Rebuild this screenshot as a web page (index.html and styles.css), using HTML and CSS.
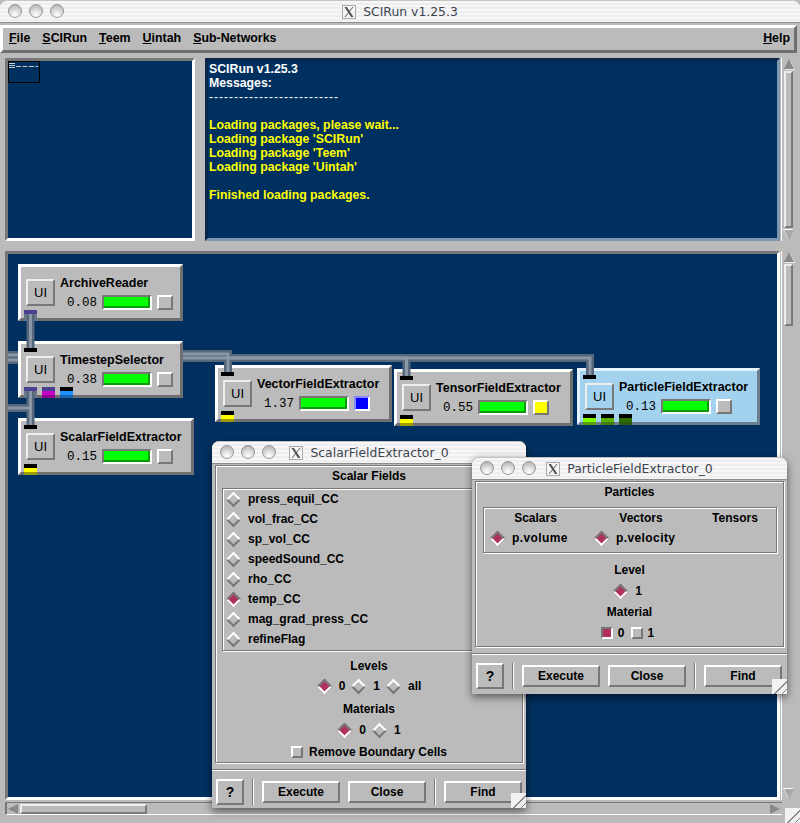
FILE: index.html
```html
<!DOCTYPE html>
<html lang="en">
<head>
    <meta charset="UTF-8">
    <title>SCIRun v1.25.3</title>
    <link rel="stylesheet" href="styles.css">
</head>
<body>

<svg class="defs" width="0" height="0">
    <symbol id="xlogo" viewBox="0 0 14 14">
        <rect x="0.5" y="0.5" width="13" height="13" fill="#f6f6f6" stroke="#aaa"/>
        <path d="M2.5 2 L5 2 L11.5 12 L9 12 Z" fill="#555"/>
        <path d="M10.5 2 L11.5 2 L3.5 12 L2.5 12 Z" fill="#555"/>
    </symbol>
</svg>

<div class="app">
    <div class="titlebar">
        <div class="lights"><i></i><i></i><i></i></div>
        <div class="wintitle main-title"><svg class="xicon"><use href="#xlogo"/></svg>SCIRun v1.25.3</div>
    </div>

    <div class="menubar">
        <span><u>F</u>ile</span>
        <span><u>S</u>CIRun</span>
        <span><u>T</u>eem</span>
        <span><u>U</u>intah</span>
        <span><u>S</u>ub-Networks</span>
        <span class="help"><u>H</u>elp</span>
    </div>

    <div class="toprow">
        <div class="minimap">
            <div class="viewport">
                <svg width="32" height="8">
                    <path d="M0 1.5H6M0 3.5H6M0 5.5H6" stroke="#ccc"/>
                    <path d="M7 4.5H29" stroke="#ccc" stroke-dasharray="5 1.5"/>
                </svg>
            </div>
        </div>
        <div class="messages">
            <div class="white">SCIRun v1.25.3</div>
            <div class="white">Messages:</div>
            <div class="white dashes">--------------------------</div>
            <div>&nbsp;</div>
            <div>Loading packages, please wait...</div>
            <div>Loading package 'SCIRun'</div>
            <div>Loading package 'Teem'</div>
            <div>Loading package 'Uintah'</div>
            <div>&nbsp;</div>
            <div>Finished loading packages.</div>
        </div>
        <div class="vscroll">
            <div class="arrow-up"></div>
            <div class="thumb thumb-full"></div>
            <div class="arrow-down"></div>
        </div>
    </div>

    <div class="midrow">
        <div class="canvas">
            <div class="node n-archive">
                <div class="ui-btn">UI</div>
                <div class="node-info">
                    <div class="node-name">ArchiveReader</div>
                    <div class="node-stats"><span class="time">0.08</span><span class="bar"><b></b></span><span class="led"></span></div>
                </div>
                <div class="ports out"><i class="p-purple"></i></div>
            </div>

            <div class="node n-timestep">
                <div class="ui-btn">UI</div>
                <div class="node-info">
                    <div class="node-name">TimestepSelector</div>
                    <div class="node-stats"><span class="time">0.38</span><span class="bar"><b></b></span><span class="led"></span></div>
                </div>
                <div class="ports in"><i></i></div>
                <div class="ports out"><i class="p-purple"></i><i class="p-magenta"></i><i class="p-blue"></i></div>
            </div>

            <div class="node n-scalar">
                <div class="ui-btn">UI</div>
                <div class="node-info">
                    <div class="node-name">ScalarFieldExtractor</div>
                    <div class="node-stats"><span class="time">0.15</span><span class="bar"><b></b></span><span class="led"></span></div>
                </div>
                <div class="ports in"><i></i></div>
                <div class="ports out"><i class="p-yellow"></i></div>
            </div>

            <div class="node n-vector">
                <div class="ui-btn">UI</div>
                <div class="node-info">
                    <div class="node-name">VectorFieldExtractor</div>
                    <div class="node-stats"><span class="time">1.37</span><span class="bar"><b></b></span><span class="led led-blue"></span></div>
                </div>
                <div class="ports in"><i></i></div>
                <div class="ports out"><i class="p-yellow"></i></div>
            </div>

            <div class="node n-tensor">
                <div class="ui-btn">UI</div>
                <div class="node-info">
                    <div class="node-name">TensorFieldExtractor</div>
                    <div class="node-stats"><span class="time">0.55</span><span class="bar"><b></b></span><span class="led led-yellow"></span></div>
                </div>
                <div class="ports in"><i></i></div>
                <div class="ports out"><i class="p-yellow"></i></div>
            </div>

            <div class="node n-particle">
                <div class="ui-btn">UI</div>
                <div class="node-info">
                    <div class="node-name">ParticleFieldExtractor</div>
                    <div class="node-stats"><span class="time">0.13</span><span class="bar"><b></b></span><span class="led"></span></div>
                </div>
                <div class="ports in"><i></i></div>
                <div class="ports out"><i class="p-green1"></i><i class="p-green2"></i><i class="p-green3"></i></div>
            </div>

            <!-- pipes sit over the nodes, coords are relative to the canvas -->
            <svg class="pipes" width="770" height="543">
                <g class="pipe-dark">
                    <path d="M22.5 60V94"/>
                    <path d="M0 101H10M0 106H10"/>
                    <path d="M175 100H220V118"/>
                    <path d="M175 104H398.500V122"/>
                    <path d="M220 104H582V121"/>
                    <path d="M22.500 137V171"/>
                    <path d="M0 154H22"/>
                </g>
                <g class="pipe-light">
                    <path d="M22.5 60V94"/>
                    <path d="M0 101H10M0 106H10"/>
                    <path d="M175 100H220V118"/>
                    <path d="M175 104H398.500V122"/>
                    <path d="M220 104H582V121"/>
                    <path d="M22.500 137V171"/>
                    <path d="M0 154H22"/>
                </g>
            </svg>
        </div>
        <div class="vscroll">
            <div class="arrow-up"></div>
            <div class="thumb thumb-short"></div>
            <div class="trough"></div>
            <div class="arrow-down"></div>
        </div>
    </div>

    <div class="hscroll">
        <div class="arrow-left"></div>
        <div class="hthumb"></div>
        <div class="trough"></div>
        <div class="arrow-right"></div>
    </div>
    <div class="grip app-grip"></div>

    <!-- ScalarFieldExtractor dialog -->
    <div class="window win-scalar">
        <div class="titlebar small">
            <div class="lights"><i></i><i></i><i></i></div>
            <div class="wintitle"><svg class="xicon"><use href="#xlogo"/></svg>ScalarFieldExtractor_0</div>
        </div>
        <div class="frame">
            <div class="heading">Scalar Fields</div>
            <div class="field-list groove">
                <label><i class="dia"></i>press_equil_CC</label>
                <label><i class="dia"></i>vol_frac_CC</label>
                <label><i class="dia"></i>sp_vol_CC</label>
                <label><i class="dia"></i>speedSound_CC</label>
                <label><i class="dia"></i>rho_CC</label>
                <label><i class="dia on"></i>temp_CC</label>
                <label><i class="dia"></i>mag_grad_press_CC</label>
                <label><i class="dia"></i>refineFlag</label>
            </div>
            <div class="heading">Levels</div>
            <div class="choices"><i class="dia on"></i>0<i class="dia"></i>1<i class="dia"></i>all</div>
            <div class="heading">Materials</div>
            <div class="choices"><i class="dia on"></i>0<i class="dia"></i>1</div>
            <div class="boundary"><i class="chk"></i>Remove Boundary Cells</div>
        </div>
        <div class="btnrow">
            <div class="btn q">?</div>
            <div class="vsep"></div>
            <div class="btn">Execute</div>
            <div class="btn">Close</div>
            <div class="vsep"></div>
            <div class="btn">Find</div>
        </div>
        <div class="grip"></div>
    </div>

    <!-- ParticleFieldExtractor dialog -->
    <div class="window win-particle">
        <div class="titlebar small">
            <div class="lights"><i></i><i></i><i></i></div>
            <div class="wintitle"><svg class="xicon"><use href="#xlogo"/></svg>ParticleFieldExtractor_0</div>
        </div>
        <div class="frame">
            <div class="heading">Particles</div>
            <div class="particle-box groove">
                <div class="pcol pcol-s"><div class="heading">Scalars</div><label><i class="dia on"></i>p.volume</label></div>
                <div class="pcol pcol-v"><div class="heading">Vectors</div><label><i class="dia on"></i>p.velocity</label></div>
                <div class="pcol pcol-t"><div class="heading">Tensors</div></div>
            </div>
            <div class="heading">Level</div>
            <div class="choices"><i class="dia on"></i>1</div>
            <div class="heading">Material</div>
            <div class="choices"><i class="chk on"></i>0<i class="chk"></i>1</div>
        </div>
        <div class="btnrow">
            <div class="btn q">?</div>
            <div class="vsep"></div>
            <div class="btn">Execute</div>
            <div class="btn">Close</div>
            <div class="vsep"></div>
            <div class="btn">Find</div>
        </div>
        <div class="grip"></div>
    </div>
</div>

</body>
</html>
```

FILE: styles.css
```css
body {
    margin: 0;
    background: #bbb;
    font-family: "Liberation Sans", Arial, sans-serif;
    font-size: 12px;
    font-weight: bold;
    color: #000;
    overflow: hidden;
}
.defs {
    position: absolute;
}
.app {
    position: relative;
    width: 800px;
    height: 823px;
    overflow: hidden;
    background: #bbb;
}

/* title bars */
.titlebar {
    position: relative;
    height: 23px;
    box-sizing: border-box;
    border-top: 1px solid #c4c4c4;
    border-bottom: 1px solid #8c8c8c;
    background: repeating-linear-gradient(#f7f7f7 0, #f7f7f7 2px, #eee 2px, #eee 4px);
    border-radius: 7px 7px 0 0;
}
.lights {
    position: absolute;
    left: 8px;
    top: 3px;
    display: flex;
    gap: 7px;
}
.lights i {
    width: 14px;
    height: 14px;
    box-sizing: border-box;
    border-radius: 50%;
    border: 1px solid #9a9a9a;
    background: radial-gradient(circle at 50% 85%, #fff 0, #e2e2e2 40%, #b5b5b5 85%);
}
.wintitle {
    display: flex;
    align-items: center;
    justify-content: center;
    height: 21px;
    font-family: "DejaVu Sans", sans-serif;
    font-size: 12.4px;
    font-weight: normal;
    color: #3c4450;
}
.xicon {
    width: 14px;
    height: 14px;
    margin-right: 7px;
}

/* menu */
.menubar {
    display: flex;
    height: 28px;
    box-sizing: border-box;
    margin-top: 2px;
    padding: 0 0 3px 6px;
    gap: 12px;
    align-items: center;
    border: 3px solid;
    border-color: #fff #6f6f6f #6f6f6f #fff;
    margin-right: 3px;
    margin-left: 0;
    font-size: 12.4px;
}
.menubar .help {
    margin-left: auto;
    margin-right: 4px;
}

/* top panels */
.toprow {
    display: flex;
    height: 183px;
    margin: 5px 5px 0 5px;
}
.minimap {
    width: 190px;
    box-sizing: border-box;
    border: 3px solid;
    border-color: #777 #fff #fff #777;
    background: #003060;
    margin-right: 10px;
}
.viewport {
    width: 32px;
    height: 22px;
    box-sizing: border-box;
    border: 1px solid #000;
}
.viewport svg {
    display: block;
}
.messages {
    flex: 1;
    box-sizing: border-box;
    padding: 1px 1px 0;
    border: 3px solid;
    border-color: #0a2548 #7f95b0 #7f95b0 #0a2548;
    background: #003060;
    color: #ff0;
    font-size: 12.3px;
    line-height: 14px;
}
.white {
    color: #fff;
}
.dashes {
    font-weight: normal;
    font-size: 12px;
    letter-spacing: 1px;
}

/* scrollbars */
.vscroll {
    width: 14px;
    display: flex;
    flex-direction: column;
    box-sizing: border-box;
    margin-left: 1px;
    padding: 1px 2px;
    border-left: 1px solid #fff;
}
.arrow-up,
.arrow-down {
    width: 0;
    height: 0;
    flex: none;
    border-left: 5px solid transparent;
    border-right: 5px solid transparent;
}
.arrow-up {
    border-bottom: 10px solid #8a8a8a;
    filter: drop-shadow(1px 1px 0 #eee);
    margin-bottom: 2px;
}
.arrow-down {
    border-top: 10px solid #a8a8a8;
    filter: drop-shadow(-1px -1px 0 #fff);
    margin-top: 2px;
}
.thumb {
    box-sizing: border-box;
    border: 2px solid;
    border-color: #eee #7a7a7a #7a7a7a #eee;
    background: #bbb;
}
.thumb-full {
    flex: 1;
}
.thumb-short {
    height: 62px;
    flex: none;
}
.trough {
    flex: 1;
}
.midrow {
    display: flex;
    height: 549px;
    margin: 10px 5px 0 5px;
}
.hscroll {
    display: flex;
    align-items: center;
    width: 777px;
    height: 13px;
    box-sizing: border-box;
    margin: 2px 0 0 5px;
    border-top: 1px solid #777;
    border-bottom: 1px solid #fff;
    border-left: 2px solid #777;
    padding-left: 1px;
}
.arrow-left,
.arrow-right {
    width: 0;
    height: 0;
    border-top: 5px solid transparent;
    border-bottom: 5px solid transparent;
}
.arrow-left {
    border-right: 10px solid #8a8a8a;
    margin-right: 2px;
}
.arrow-right {
    border-left: 10px solid #8a8a8a;
    margin-right: 2px;
}
.hthumb {
    width: 127px;
    height: 10px;
    box-sizing: border-box;
    border: 2px solid;
    border-color: #eee #7a7a7a #7a7a7a #eee;
}

/* network canvas */
.canvas {
    position: relative;
    flex: 1;
    box-sizing: border-box;
    border: 3px solid;
    border-color: #777 #fff #fff #777;
    background: #003060;
}
.pipes {
    position: absolute;
    left: 0;
    top: 0;
    fill: none;
}
.pipe-dark {
    stroke: #56677b;
    stroke-width: 8;
}
.pipe-light {
    stroke: #8a97a6;
    stroke-width: 3;
}
.node {
    position: absolute;
    display: flex;
    gap: 5px;
    height: 57px;
    box-sizing: border-box;
    padding: 12px 0 0 5px;
    border: 3px solid;
    border-color: #fff #6f6f6f #6f6f6f #fff;
    background: #bbb;
}
.n-archive { left: 10px; top: 10px; width: 165px; }
.n-timestep { left: 10px; top: 87px; width: 165px; }
.n-scalar { left: 10px; top: 164px; width: 176px; }
.n-vector { left: 207px; top: 111px; width: 177px; }
.n-tensor { left: 386px; top: 115px; width: 179px; }
.n-particle {
    left: 569px;
    top: 114px;
    width: 183px;
    background: #a3d2ee;
    border-color: #e4f4ff #6d7f8e #6d7f8e #e4f4ff;
}
.ui-btn {
    width: 29px;
    height: 27px;
    box-sizing: border-box;
    border: 2px solid;
    border-color: #eee #777 #777 #eee;
    font-size: 13px;
    font-weight: normal;
    line-height: 23px;
    text-align: center;
}
.node-name {
    font-size: 12.5px;
    line-height: 14px;
    margin-top: -3px;
    white-space: nowrap;
}
.node-stats {
    display: flex;
    align-items: center;
    gap: 6px;
    margin: 5px 0 0 7px;
}
.time {
    width: 29px;
    font-family: "Liberation Mono", monospace;
    font-size: 12.500px;
    font-weight: normal;
}
.bar {
    width: 50px;
    height: 15px;
    box-sizing: border-box;
    border: 2px solid;
    border-color: #777 #fff #fff #777;
}
.bar b {
    display: block;
    height: 11px;
    background: #0f0;
    border-right: 2px solid #0a9a0a;
    border-bottom: 2px solid #0a9a0a;
    box-sizing: border-box;
}
.led {
    width: 16px;
    height: 15px;
    box-sizing: border-box;
    border: 2px solid;
    border-color: #fff #777 #777 #fff;
    background: #bbb;
    margin-left: -1px;
}
.led-blue {
    background: #00f;
    border-color: #8888ff #fff #fff #8888ff;
}
.led-yellow {
    background: #ff0;
    border-color: #fff #777 #777 #fff;
}

/* ports */
.ports {
    position: absolute;
    left: 3px;
    display: flex;
    gap: 5px;
}
.ports i {
    display: block;
    width: 13px;
}
.ports.in {
    top: 4px;
}
.ports.in i {
    height: 4px;
    background: #000;
}
.ports.out {
    bottom: -3px;
}
.ports.out i {
    height: 11px;
}
.p-purple { background: linear-gradient(#4b3f8f 0 4px, #6b7888 4px 100%); }
.p-magenta { background: linear-gradient(#4b3f8f 0 4px, #c400c4 4px 8px, #8f008f 8px); }
.p-blue { background: linear-gradient(#000 0 4px, #1e90ff 4px 8px, #1565b0 8px); }
.p-yellow { background: linear-gradient(#000 0 4px, #ff0 4px 8px, #9c9c00 8px); }
.p-green1 { background: linear-gradient(#000 0 4px, #7cfc00 4px 8px, #589e10 8px); }
.p-green2 { background: linear-gradient(#000 0 4px, #5ab000 4px 8px, #437c10 8px); }
.p-green3 { background: linear-gradient(#000 0 4px, #2e6b00 4px 8px, #2b5a10 8px); }

/* dialogs */
.window {
    position: absolute;
    box-sizing: border-box;
    background: #bbb;
    border-radius: 7px 7px 0 0;
    box-shadow: 0 3px 9px rgba(0, 0, 0, 0.55);
}
.win-scalar {
    left: 212px;
    top: 441px;
    width: 314px;
    height: 367px;
}
.win-particle {
    left: 472px;
    top: 457px;
    width: 315px;
    height: 237px;
}
.frame {
    display: flex;
    flex-direction: column;
    align-items: center;
    box-sizing: border-box;
    margin: 1px 3px 0;
    border: 1px solid #777;
    box-shadow: 1px 1px 0 #fff, inset 1px 1px 0 #fff;
}
.win-scalar .frame {
    height: 298px;
}
.win-particle .frame {
    height: 166px;
}
.heading {
    line-height: 20px;
}
.win-scalar .heading + .choices {
    margin-bottom: 2px;
    padding-right: 6px;
}
.win-particle .heading + .choices {
    padding-right: 10px;
}
.groove {
    align-self: stretch;
    box-sizing: border-box;
    border: 1px solid #777;
    box-shadow: 1px 1px 0 #fff, inset 1px 1px 0 #fff;
}
.field-list {
    display: flex;
    flex-direction: column;
    margin: 2px 5px 5px 6px;
    height: 164px;
    padding: 0 0 0 2px;
}
.field-list label {
    display: flex;
    align-items: center;
    height: 20px;
}
.dia {
    display: block;
    flex: none;
    width: 7px;
    height: 7px;
    margin: 0 9px 0 3px;
    box-sizing: content-box;
    transform: rotate(45deg);
    border: 2px solid;
    border-color: #fff #777 #777 #fff;
    background: #bbb;
}
.dia.on {
    border-color: #777 #fff #fff #777;
    background: #b03060;
}
.choices {
    display: flex;
    align-items: center;
    height: 22px;
}
.choices .dia {
    margin-left: 8px;
}
.chk {
    display: block;
    width: 12px;
    height: 12px;
    box-sizing: border-box;
    margin: 0 5px 0 6px;
    border: 2px solid;
    border-color: #fff #777 #777 #fff;
}
.chk.on {
    border-color: #777 #fff #fff #777;
    background: #b03060;
}
.boundary {
    display: flex;
    align-items: center;
    height: 20px;
    margin-top: -1px;
}
.boundary .chk {
    margin: 0 6px 0 0;
}
.particle-box {
    display: flex;
    margin: 5px 6px 7px 7px;
    height: 46px;
}
.pcol {
    display: flex;
    flex-direction: column;
    align-items: center;
}
.pcol-s { width: 103px; }
.pcol-v { width: 108px; }
.pcol-t { width: 80px; }
.pcol label {
    display: flex;
    align-items: center;
    align-self: flex-start;
    height: 20px;
    letter-spacing: 0.4px;
}
.pcol-s label {
    margin-left: 5px;
}
.pcol-v label {
    margin-left: 6px;
}
.btnrow {
    display: flex;
    align-items: center;
    height: 26px;
    margin-top: 6px;
    padding: 9px 4px 0;
    border-top: 1px solid #777;
    box-shadow: inset 0 1px 0 #fff;
}
.btn {
    flex: none;
    width: 78px;
    height: 22px;
    box-sizing: border-box;
    border: 2px solid;
    border-color: #fff #777 #777 #fff;
    line-height: 18px;
    text-align: center;
}
.btn + .btn {
    margin-left: 8px;
}
.btn.q {
    width: 28px;
    height: 26px;
    font-size: 14px;
    line-height: 22px;
}
.vsep {
    flex: none;
    width: 1px;
    height: 26px;
    margin: 0 8px;
    background: #777;
    border-right: 1px solid #fff;
}
.grip {
    position: absolute;
    right: 0;
    bottom: 0;
    width: 15px;
    height: 15px;
    background:
        linear-gradient(135deg, #f2f2f2 0 50%, transparent 50%),
        repeating-linear-gradient(135deg, #eee 0 2px, #888 2px 3px, #eee 3px 5px);
}
```
